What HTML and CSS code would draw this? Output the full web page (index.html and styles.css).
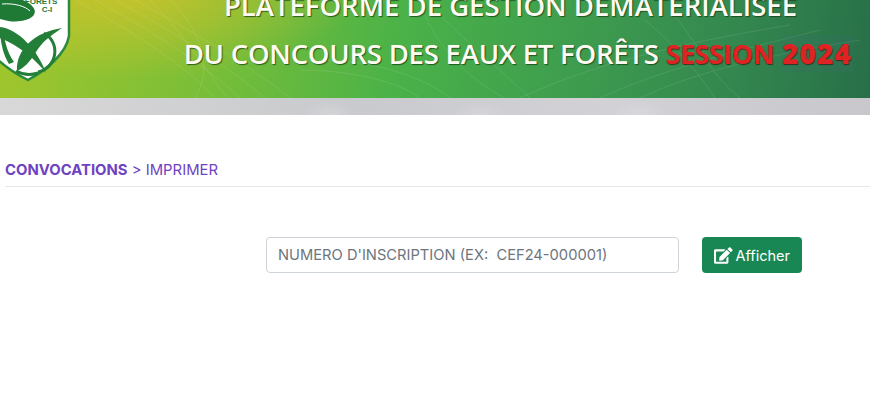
FILE: index.html
```html
<!DOCTYPE html>
<html lang="fr">
<head>
    <meta charset="UTF-8">
    <meta name="viewport" content="width=device-width, initial-scale=1.0">
    <title>Convocations - Imprimer</title>
    <link rel="stylesheet" href="styles.css">
</head>
<body>
    <header class="banner">
        <div class="banner-art">
            <!-- fine contour lines of the banner picture -->
            <svg class="banner-lines" viewBox="0 0 870 98" preserveAspectRatio="none" aria-hidden="true">
                <g fill="none" stroke="#ffffff" stroke-width="0.6" opacity="0.16">
                    <path d="M75 0C140 35 190 70 215 98"/>
                    <path d="M95 0C160 35 210 70 240 98"/>
                    <path d="M115 0C180 35 232 70 265 98"/>
                    <path d="M135 0C200 35 255 70 290 98"/>
                    <path d="M150 0C185 35 205 70 228 98"/>
                    <path d="M170 0C205 35 212 70 195 98"/>
                    <path d="M440 15C470 45 500 70 530 98"/>
                    <path d="M425 15C440 50 470 80 505 98"/>
                    <path d="M320 60C370 60 420 75 450 98"/>
                    <path d="M300 70C350 70 400 82 420 98"/>
                    <path d="M645 20C680 50 700 75 715 98"/>
                    <path d="M670 10C700 45 710 75 740 98"/>
                    <path d="M600 98C660 70 740 50 820 30"/>
                    <path d="M640 98C700 70 770 55 860 40"/>
                    <path d="M520 98C600 60 700 40 790 25"/>
                </g>
            </svg>
            <!-- logo shield, cut by the top of the window -->
            <svg class="logo" viewBox="0 0 72 82" aria-hidden="true">
                <path d="M-6 -4H69V36C66 54 46 70 28 80C16 74 4 66 -6 56Z" fill="#ffffff" stroke="#2b8a3e" stroke-width="2.5"/>
                <ellipse cx="10" cy="9" rx="25" ry="12" fill="#1f7a35" transform="rotate(8 10 9)"/>
                <path d="M2 4C14 3 25 6 30 11" fill="none" stroke="#ffffff" stroke-width="1"/>
                <path d="M0 27C18 29 38 50 46 73C36 60 20 46 0 38Z" fill="#237f38"/>
                <path d="M17 71C16 48 36 32 62 28C50 36 42 42 36 52C30 62 24 68 17 71Z" fill="#237f38"/>
                <path d="M44 33A21 21 0 0 1 38 72" fill="none" stroke="#237f38" stroke-width="3"/>
                <path d="M16 71A27 27 0 0 0 38 73" fill="none" stroke="#237f38" stroke-width="3"/>
                <path d="M3 30C5 42 7 52 14 62L9 64C3 54 1 44 0 32Z" fill="#237f38"/>
                <text class="logo-text" x="41" y="4">FORÊTS</text>
                <text class="logo-text" x="47" y="12">C-I</text>
            </svg>
            <h1 class="banner-title">
                <span class="title-line">PLATEFORME DE GESTION DÉMATÉRIALISÉE</span>
                <span class="title-line title-second">DU CONCOURS DES EAUX ET FORÊTS <span class="session">SESSION</span> <span class="year">2024</span></span>
            </h1>
        </div>
        <div class="banner-band"></div>
    </header>

    <main class="content">
        <div class="breadcrumb"><strong>CONVOCATIONS</strong> &gt; IMPRIMER</div>
        <form class="search-form">
            <input class="search-input" type="text" placeholder="NUMERO D'INSCRIPTION (EX:  CEF24-000001)">
            <button class="btn-show" type="button">
                <svg class="btn-icon" viewBox="0 0 576 512" aria-hidden="true"><path fill="currentColor" d="M402.6 83.2l90.2 90.2c3.8 3.8 3.8 10 0 13.8L274.4 405.6l-92.8 10.3c-12.4 1.4-22.9-9.1-21.5-21.5l10.3-92.8L388.8 83.2c3.8-3.8 10-3.8 13.8 0zm162-22.9l-48.8-48.8c-15.2-15.2-39.9-15.2-55.2 0l-35.4 35.4c-3.8 3.8-3.8 10 0 13.8l90.2 90.2c3.8 3.8 10 3.8 13.8 0l35.4-35.4c15.2-15.3 15.2-40 0-55.2zM384 346.2V448H64V128h229.8c3.2 0 6.2-1.3 8.5-3.5l40-40c7.6-7.6 2.2-20.5-8.5-20.5H48C21.5 64 0 85.5 0 112v352c0 26.5 21.5 48 48 48h352c26.5 0 48-21.5 48-48V306.2c0-10.7-12.9-16-20.5-8.5l-40 40c-2.2 2.3-3.5 5.3-3.5 8.5z"/></svg>
                Afficher
            </button>
        </form>
    </main>
</body>
</html>
```

FILE: styles.css
```css
body {
    margin: 0;
    font-family: Inter, "Liberation Sans", sans-serif;
    background-color: #FFFFFF;
    color: #212529;
    overflow: hidden;
}
.banner-art {
    position: relative;
    height: 98px;
    overflow: hidden;
    background:
        radial-gradient(ellipse 230px 90px at 130px -10px, rgba(226, 196, 40, 0.7), rgba(226, 196, 40, 0) 100%),
        linear-gradient(100deg, #a2c62c 0%, #79be38 25%, #4ab248 46%, #3f9f4e 64%, #33874f 84%, #286f48 100%);
}
.banner-lines {
    position: absolute;
    left: 0;
    top: 0;
    width: 100%;
    height: 100%;
}
.logo {
    position: absolute;
    left: 0;
    top: 0;
    width: 72px;
    height: 82px;
}
.logo-text {
    font-family: "Liberation Sans", sans-serif;
    font-size: 8px;
    font-weight: 700;
    fill: #1f7a35;
    text-anchor: middle;
}
.banner-title {
    position: relative;
    margin: -17px 17px 0 0;
    display: flex;
    flex-direction: column;
    align-items: flex-end;
    gap: 2px;
    font-family: "Open Sans", sans-serif;
    font-size: 27.5px;
    font-weight: 600;
    line-height: 46px;
    color: #FFFBF2;
    text-shadow: 1px 1px 1px rgba(20, 60, 20, 0.75);
    white-space: nowrap;
}
.title-line:first-child {
    margin-right: 56px;
}
.title-second {
    letter-spacing: -0.22px;
}
.session, .year {
    color: #E02222;
    text-shadow: 1px 1px 1px rgba(60, 30, 20, 0.8);
}
.session {
    font-size: 26.5px;
    font-weight: 700;
}
.year {
    padding: 0 1px;
    font-weight: 800;
    letter-spacing: 1.4px;
    background-color: rgba(60, 110, 120, 0.18);
    line-height: 28px;
}
.banner-band {
    height: 17px;
    background-color: #CFCFD3;
    background-image:
        radial-gradient(ellipse 26px 14px at 330px 16px, rgba(255, 255, 255, 0.18), rgba(255, 255, 255, 0)),
        radial-gradient(ellipse 30px 14px at 480px 18px, rgba(255, 255, 255, 0.16), rgba(255, 255, 255, 0)),
        radial-gradient(ellipse 30px 14px at 640px 16px, rgba(255, 255, 255, 0.16), rgba(255, 255, 255, 0)),
        linear-gradient(90deg, #D8D8D8 0%, #C9CACD 40%, #D2D2D6 70%, #C8C8CC 100%);
}
.content {
    padding: 46px 0 0 5px;
}
.breadcrumb {
    padding-bottom: 6px;
    border-bottom: 1px solid #E6E6E8;
    font-size: 14.85px;
    line-height: 19px;
    color: #6F42C1;
}
.breadcrumb strong {
    font-weight: 700;
}
.search-form {
    display: flex;
    gap: 23px;
    margin: 50px 0 0 261px;
}
.search-input {
    width: 413px;
    height: 36px;
    box-sizing: border-box;
    padding: 6px 11px;
    border: 1px solid #CED4DA;
    border-radius: 4px;
    font-family: inherit;
    font-size: 14.7px;
}
.search-input::placeholder {
    color: #6C757D;
    opacity: 1;
}
.btn-show {
    display: flex;
    align-items: center;
    gap: 3px;
    width: 100px;
    height: 36px;
    box-sizing: border-box;
    padding: 0 12px;
    border: 0;
    border-radius: 4px;
    background-color: #198754;
    color: #FFFFFF;
    font-family: inherit;
    font-size: 14.5px;
}
.btn-icon {
    width: 19px;
    height: 17px;
}
```
